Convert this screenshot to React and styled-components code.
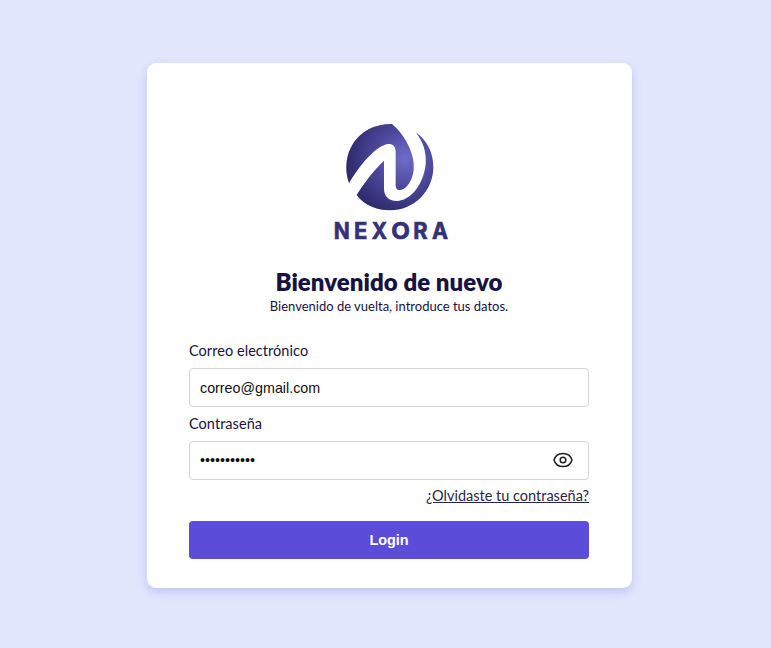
import React from "react";
import styled, { createGlobalStyle } from "styled-components";

const GlobalStyle = createGlobalStyle`
  *, *::before, *::after { box-sizing: border-box; }
  body { margin: 0; background: #e1e6fd; font-family: Lato, "Open Sans", sans-serif; color: #17123f; }
`;

const Page = styled.main`
  display: flex;
  justify-content: center;
  align-items: flex-start;
  min-height: 648px;
  padding: 63px 0 0 7px;
  background: #e1e6fd;
`;

const Card = styled.form`
  display: flex;
  flex-direction: column;
  width: 485px;
  height: 525px;
  padding: 47px 42.5px 0;
  border-radius: 9px;
  background: #fff;
  box-shadow: 0 4px 10px rgba(88, 98, 215, 0.25);
`;

const Logo = styled.svg`
  display: block;
  align-self: center;
  width: 130px;
  height: 140px;
`;

const Wordmark = styled.text`
  font: 700 69px Inter, sans-serif;
  fill: #343179;
  stroke: #343179;
  stroke-width: 2px;
`;

const Title = styled.h1`
  margin: 15.5px 0 0;
  font-size: 24px;
  line-height: 32px;
  font-weight: 800;
  text-align: center;
  white-space: nowrap;
  letter-spacing: 0.05px;
`;

const Subtitle = styled.p`
  margin: 0 0 25.5px;
  font-size: 13px;
  line-height: 17px;
  text-align: center;
`;

const Label = styled.label`
  height: 28px;
  font-size: 14.5px;
  line-height: 22px;
  letter-spacing: 0.05px;
`;

const Field = styled.div`
  display: flex;
  align-items: center;
  height: 39px;
  margin-bottom: ${(p) => p.$gap}px;
  padding: 0 15px 0 10px;
  border: 1px solid #d4d4d8;
  border-radius: 4px;
`;

const Input = styled.input`
  flex: 1;
  min-width: 0;
  padding: 0;
  border: 0;
  outline: 0;
  background: transparent;
  color: #111;
  font: 14.3px "Liberation Sans", Arial, sans-serif;
`;

const EyeIcon = styled.svg`
  width: 20px;
  height: 20px;
  fill: none;
  stroke: #222;
  stroke-width: 1.5;
`;

const ForgotLink = styled.a`
  align-self: flex-end;
  margin-bottom: 14px;
  font-size: 14.5px;
  line-height: 22px;
  color: #292548;
  text-decoration: underline;
`;

const Submit = styled.button`
  height: 38px;
  padding: 0;
  border: 0;
  border-radius: 4px;
  background: #5b4dda;
  color: #fff;
  font: 700 14.4px "Liberation Sans", Arial, sans-serif;
`;

const letters = [
  { char: "N", x: 27, width: 48 },
  { char: "E", x: 88, width: 40 },
  { char: "X", x: 141, width: 46 },
  { char: "O", x: 200, width: 56 },
  { char: "R", x: 266, width: 43 },
  { char: "A", x: 322, width: 48 },
];

export default function App() {
  return (
    <>
      <GlobalStyle />
      <Page>
        <Card onSubmit={(e) => e.preventDefault()}>
          <Logo viewBox="-2 0 390 420" role="img" aria-label="Nexora">
            <defs>
              <radialGradient id="orb" gradientUnits="userSpaceOnUse" cx="240" cy="145" r="175">
                <stop offset="0" stopColor="#706dc9" />
                <stop offset="0.5" stopColor="#4b489c" />
                <stop offset="1" stopColor="#2e2a6c" />
              </radialGradient>
            </defs>
            <path fill="url(#orb)" d="M73 220C44 136 94 41 202 42C242 75 272 135 267 179C264 211 245 240 224 240Q213 240 213 226V126C213 107 201 100 186 103C151 111 105 166 73 220Z" />
            <path fill="url(#orb)" d="M96 255C119 219 145 183 178 152V235C178 258 191 273 216 273C260 273 297 220 303 163C306 124 294 93 274 68C309 91 326 130 326 171C326 243 268 301 196 301C158 301 118 286 96 255Z" />
            {letters.map(({ char, x, width }) => (
              <Wordmark key={char} x={x} y="388" textLength={width} lengthAdjust="spacingAndGlyphs">
                {char}
              </Wordmark>
            ))}
          </Logo>
          <Title>Bienvenido de nuevo</Title>
          <Subtitle>Bienvenido de vuelta, introduce tus datos.</Subtitle>
          <Label htmlFor="email">Correo electrónico</Label>
          <Field $gap={5.5}>
            <Input id="email" type="email" defaultValue="correo@gmail.com" />
          </Field>
          <Label htmlFor="password">Contraseña</Label>
          <Field $gap={5.5}>
            <Input id="password" type="password" defaultValue="12345678901" />
            <EyeIcon viewBox="0 0 20 20" aria-hidden="true">
              <path d="M1 10C2.2 5.8 5.7 3.4 10 3.4S17.8 5.8 19 10C17.8 14.2 14.3 16.6 10 16.6S2.2 14.2 1 10Z" />
              <circle cx="10" cy="10" r="2.8" />
            </EyeIcon>
          </Field>
          <ForgotLink href="#">¿Olvidaste tu contraseña?</ForgotLink>
          <Submit type="submit">Login</Submit>
        </Card>
      </Page>
    </>
  );
}
